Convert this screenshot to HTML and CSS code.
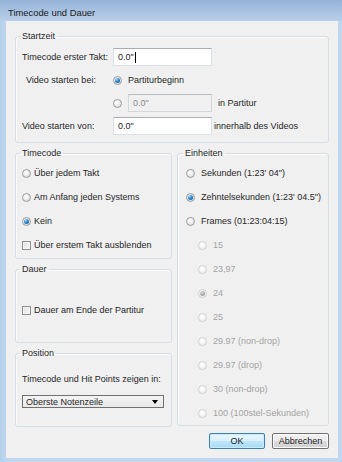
FILE: index.html
```html
<!DOCTYPE html>
<html lang="de">
<head>
<meta charset="utf-8">
<title>Timecode und Dauer</title>
<link rel="stylesheet" href="styles.css">
</head>
<body>
<div class="window">
  <div class="titlebar">Timecode und Dauer</div>
  <div class="client">
    <fieldset class="group startzeit">
      <legend>Startzeit</legend>
      <div class="start-grid">
        <span class="lbl">Timecode erster Takt:</span>
        <div class="cell"><span class="textbox wide">0.0"<span class="caret"></span></span></div>
        <span class="lbl indent">Video starten bei:</span>
        <div class="cell"><span class="radio checked"></span><span class="rtext">Partiturbeginn</span></div>
        <span class="lbl"></span>
        <div class="cell"><span class="radio"></span><span class="textbox narrow disabled">0.0"</span><span class="after">in Partitur</span></div>
        <span class="lbl">Video starten von:</span>
        <div class="cell"><span class="textbox wide">0.0"</span><span class="after tight">innerhalb des Videos</span></div>
      </div>
    </fieldset>

    <div class="columns">
      <div class="col-left">
        <fieldset class="group timecode">
          <legend>Timecode</legend>
          <div class="opt"><span class="radio"></span><span>Über jedem Takt</span></div>
          <div class="opt"><span class="radio"></span><span>Am Anfang jeden Systems</span></div>
          <div class="opt"><span class="radio checked"></span><span>Kein</span></div>
          <div class="opt"><span class="check"></span><span>Über erstem Takt ausblenden</span></div>
        </fieldset>
        <fieldset class="group dauer">
          <legend>Dauer</legend>
          <div class="opt"><span class="check"></span><span>Dauer am Ende der Partitur</span></div>
        </fieldset>
        <fieldset class="group position">
          <legend>Position</legend>
          <div class="pos-text">Timecode und Hit Points zeigen in:</div>
          <div class="combo"><span>Oberste Notenzeile</span><span class="arrow"></span></div>
        </fieldset>
      </div>
      <fieldset class="group einheiten">
        <legend>Einheiten</legend>
        <div class="opt wide-gap"><span class="radio"></span><span>Sekunden (1:23' 04")</span></div>
        <div class="opt wide-gap"><span class="radio checked"></span><span>Zehntelsekunden (1:23' 04.5")</span></div>
        <div class="opt wide-gap"><span class="radio"></span><span>Frames (01:23:04:15)</span></div>
        <div class="opt sub disabled"><span class="radio"></span><span>15</span></div>
        <div class="opt sub disabled"><span class="radio"></span><span>23,97</span></div>
        <div class="opt sub disabled"><span class="radio checked"></span><span>24</span></div>
        <div class="opt sub disabled"><span class="radio"></span><span>25</span></div>
        <div class="opt sub disabled"><span class="radio"></span><span>29.97 (non-drop)</span></div>
        <div class="opt sub disabled"><span class="radio"></span><span>29.97 (drop)</span></div>
        <div class="opt sub disabled"><span class="radio"></span><span>30 (non-drop)</span></div>
        <div class="opt sub disabled"><span class="radio"></span><span>100 (100stel-Sekunden)</span></div>
      </fieldset>
    </div>

    <div class="buttons">
      <button class="btn default">OK</button>
      <button class="btn">Abbrechen</button>
    </div>
  </div>
</div>
</body>
</html>
```

FILE: styles.css
```css
* { box-sizing: border-box; }

html, body {
  margin: 0;
  padding: 0;
  background: #bdd4ec;
}

body {
  font-family: "Liberation Sans", Arial, sans-serif;
  font-size: 9px;
  line-height: 12px;
  color: #262626;
  white-space: nowrap;
}

.window {
  width: 342px;
  height: 462px;
  display: flex;
  flex-direction: column;
  background: linear-gradient(90deg, #b6cfea 0, #c0d6ee 6px, #c0d6ee 100%);
}

.titlebar {
  height: 21px;
  padding: 7px 0 0 8px;
  font-size: 9.4px;
  line-height: 12px;
  background: linear-gradient(#95b2d6, #b9d0ea);
  color: #1a1a1a;
}

.client {
  margin: 0 4px 4px 6px;
  height: 437px;
  background: #f0f0f0;
  padding: 9px 0 0 9px;
}

/* group boxes */
.group {
  margin: 0;
  padding: 0 6px 0 6px;
  border: 1px solid #d5dfe5;
  border-radius: 3px;
  box-shadow: inset 1px 1px 0 #fbfbfb;
  min-width: 0;
}

.group legend {
  padding: 0 2px;
  margin-left: -2px;
  line-height: 12px;
}

.startzeit {
  width: 314px;
  height: 113px;
  padding-top: 6px;
}

.start-grid {
  display: grid;
  grid-template-columns: 91px 1fr;
  grid-auto-rows: 18px;
  row-gap: 5px;
}

.lbl {
  display: flex;
  align-items: center;
}

.lbl.indent { padding-left: 4px; }

.cell {
  display: flex;
  align-items: center;
}

.rtext { margin-left: 6px; }

.textbox {
  display: flex;
  align-items: center;
  height: 18px;
  padding-left: 4px;
  background: #fff;
  border: 1px solid #dbe1e8;
  border-top-color: #abadb3;
}

.textbox.wide { width: 99px; }

.textbox.narrow {
  width: 84px;
  margin-left: 6px;
}

.textbox.disabled {
  background: #f0f0f0;
  border-color: #d4d8dc;
  border-top-color: #b8bcc0;
  color: #8a8a8a;
}

.caret {
  display: inline-block;
  width: 1px;
  height: 11px;
  margin-left: 1px;
  background: #000;
}

.after { margin-left: 6px; }
.after.tight { margin-left: 2px; }

/* radio & check */
.radio {
  flex: none;
  position: relative;
  width: 9px;
  height: 9px;
  border-radius: 50%;
  border: 1px solid #999ca0;
  background: radial-gradient(circle at 40% 35%, #ffffff 0, #e6e6e6 60%, #cfd0d2 100%);
}

.radio.checked::after {
  content: "";
  position: absolute;
  left: 1px;
  top: 1px;
  width: 5px;
  height: 5px;
  border-radius: 50%;
  background: radial-gradient(circle at 35% 30%, #9fd8ff 0, #2a86cc 45%, #0f4f8e 100%);
}

.check {
  flex: none;
  width: 9px;
  height: 9px;
  border: 1px solid #8e8f8f;
  background: linear-gradient(135deg, #dcdcdc, #fbfbfb);
  box-shadow: inset 0 0 0 1px #f4f4f4;
}

.opt {
  display: flex;
  align-items: center;
  height: 24px;
  gap: 3px;
}

.opt.wide-gap { gap: 6px; padding-left: 1px; }

.opt.sub {
  padding-left: 13px;
  gap: 6px;
}

.opt.disabled { color: #a3a3a3; }

.opt.disabled .radio {
  border-color: #cfd1d3;
  background: radial-gradient(circle at 40% 35%, #ffffff 0, #f2f2f2 60%, #e6e6e6 100%);
}

.opt.disabled .radio.checked::after {
  background: radial-gradient(circle at 35% 30%, #d8d8d8 0, #a9a9a9 60%, #8f8f8f 100%);
}

/* columns */
.columns {
  display: flex;
  gap: 5px;
  margin-top: 4px;
  width: 314px;
}

.col-left {
  width: 157px;
  display: flex;
  flex-direction: column;
  gap: 4px;
}

.timecode {
  height: 112px;
  padding-top: 2px;
}

.dauer {
  height: 80px;
  padding-top: 23px;
}

.position {
  height: 80px;
  padding-top: 14px;
}

.pos-text { height: 12px; }

.combo {
  margin-top: 10px;
  width: 142px;
  height: 13px;
  border: 1px solid #707070;
  background: linear-gradient(#f4f4f4, #e8e8e8);
  display: flex;
  align-items: center;
  justify-content: space-between;
  padding: 0 5px 0 3px;
}

.arrow {
  width: 0;
  height: 0;
  border-left: 3.5px solid transparent;
  border-right: 3.5px solid transparent;
  border-top: 4px solid #000;
}

.einheiten {
  width: 152px;
  height: 279px;
  padding-top: 2px;
  padding-left: 7px;
}

/* buttons */
.buttons {
  display: flex;
  justify-content: flex-end;
  gap: 7px;
  width: 314px;
  margin-top: 6px;
}

.btn {
  font: inherit;
  color: #1b1b1b;
  height: 16px;
  padding: 0;
  border: 1px solid #707070;
  border-radius: 2px;
  background: linear-gradient(#f2f2f2 0, #ebebeb 50%, #dddddd 51%, #cfcfcf 100%);
  box-shadow: inset 0 0 0 1px #fbfbfb;
  line-height: 12px;
}

.btn.default {
  width: 56px;
  border-color: #3c7fb1;
  background: linear-gradient(#eaf6fd 0, #d9f0fc 50%, #bee6fd 51%, #a7d9f5 100%);
  box-shadow: inset 0 0 0 1px #c9ecfd;
}

.btn:not(.default) { width: 57px; }
```
